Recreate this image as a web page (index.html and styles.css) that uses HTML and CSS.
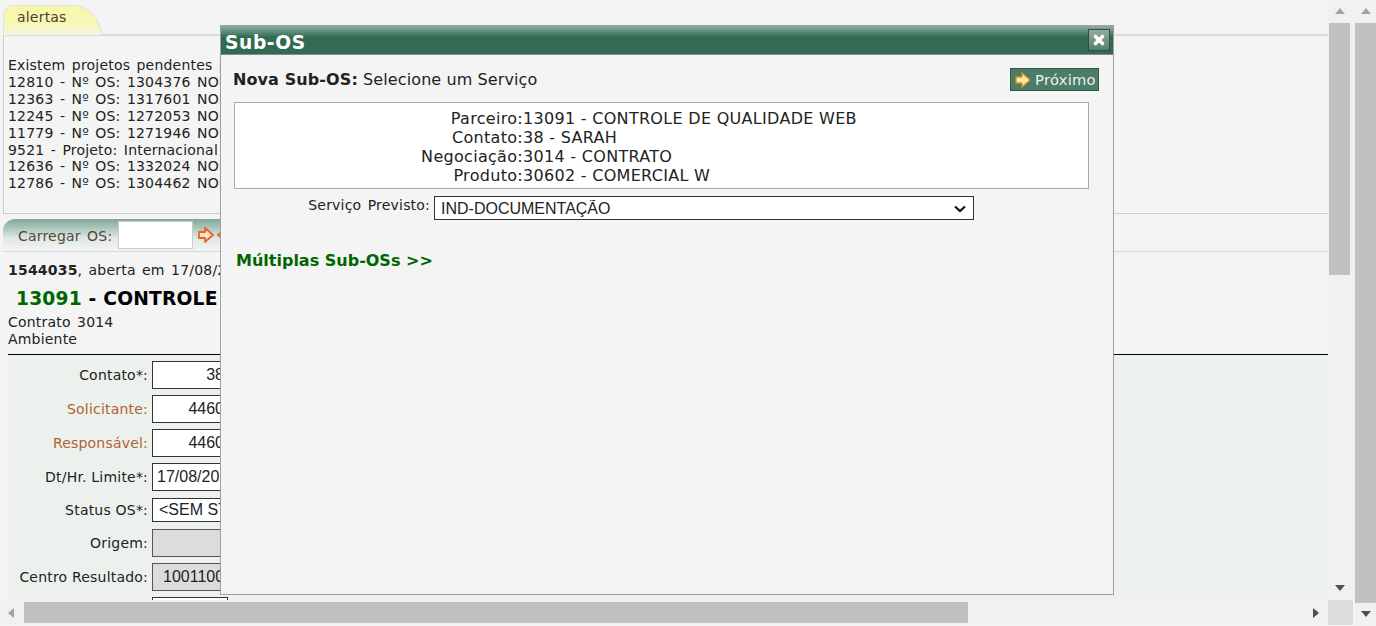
FILE: index.html
```html
<!DOCTYPE html>
<html lang="en">
<head>
  <meta charset="UTF-8">
  <title>Sub-OS</title>
  <link rel="stylesheet" href="styles.css">
</head>
<body>
  <div class="viewport">
    <div class="page">
      <div class="page-main">
        <div class="content">

          <!-- Alertas -->
          <div class="tab-row">
            <div class="tab-alert">alertas</div>
          </div>
          <div class="alert-box">
            <div>Existem projetos pendentes p</div>
            <div>12810 - Nº OS: 1304376 NOR</div>
            <div>12363 - Nº OS: 1317601 NOR</div>
            <div>12245 - Nº OS: 1272053 NOR</div>
            <div>11779 - Nº OS: 1271946 NOR</div>
            <div>9521 - Projeto: Internacional</div>
            <div>12636 - Nº OS: 1332024 NOR</div>
            <div>12786 - Nº OS: 1304462 NOR</div>
          </div>

          <!-- Carregar OS -->
          <div class="load-row">
            <div class="load-bar">
              <span class="load-label">Carregar OS:</span>
              <input type="text" class="load-input">
              <svg class="load-arrow" width="18" height="18" viewBox="0 0 18 18"><path d="M2 6h6V2l8 7-8 7v-4H2z" fill="#fde0c8" stroke="#e0662a" stroke-width="1.8" stroke-linejoin="round"/></svg>
              <svg class="load-arrow load-arrow-back" width="18" height="18" viewBox="0 0 18 18"><path d="M16 6h-6V2L2 9l8 7v-4h6z" fill="#fde0c8" stroke="#e0662a" stroke-width="1.8" stroke-linejoin="round"/></svg>
            </div>
          </div>

          <div class="os-info">
            <div class="os-open"><b>1544035</b>, aberta em 17/08/2021</div>
            <div class="os-title"><span class="os-code">13091</span> - CONTROLE</div>
            <div class="os-sub">Contrato 3014</div>
            <div class="os-sub">Ambiente</div>
          </div>

          <div class="form">
            <div class="form-row">
              <label class="form-label">Contato*:</label>
              <div class="field field-num">38</div>
            </div>
            <div class="form-row">
              <label class="form-label form-link">Solicitante:</label>
              <div class="field field-num">4460</div>
            </div>
            <div class="form-row">
              <label class="form-label form-link">Responsável:</label>
              <div class="field field-num">4460</div>
            </div>
            <div class="form-row">
              <label class="form-label">Dt/Hr. Limite*:</label>
              <div class="field field-wide">17/08/2021 12:00</div>
            </div>
            <div class="form-row form-row-short">
              <label class="form-label">Status OS*:</label>
              <div class="field field-wide field-select">&lt;SEM STATUS&gt;</div>
            </div>
            <div class="form-row">
              <label class="form-label">Origem:</label>
              <div class="field field-wide field-off"></div>
            </div>
            <div class="form-row">
              <label class="form-label">Centro Resultado:</label>
              <div class="field field-wide field-off field-center">10011001</div>
            </div>
            <div class="form-row">
              <label class="form-label"></label>
              <div class="field"></div>
            </div>
          </div>
        </div>

        <div class="vbar">
          <svg class="sb-arrow" width="12" height="8" viewBox="0 0 12 8"><path d="M6 1l5 6H1z" fill="#a3a3a3"/></svg>
          <div class="vbar-thumb"></div>
          <div class="sb-fill"></div>
          <svg class="sb-arrow" width="12" height="8" viewBox="0 0 12 8"><path d="M6 7L1 1h10z" fill="#505050"/></svg>
        </div>
      </div>

      <div class="hbar-row">
        <div class="hbar">
          <svg width="8" height="12" viewBox="0 0 8 12"><path d="M1 6l6-5v10z" fill="#a3a3a3"/></svg>
          <div class="hbar-thumb"></div>
          <div class="sb-fill"></div>
          <svg width="8" height="12" viewBox="0 0 8 12"><path d="M7 6L1 1v10z" fill="#505050"/></svg>
        </div>
        <div class="corner"></div>
      </div>
    </div>

    <!-- Janela Sub-OS -->
    <div class="dialog">
      <div class="dialog-title">
        <span class="dialog-name">Sub-OS</span>
        <div class="dialog-close">
          <svg width="16" height="16" viewBox="0 0 16 16"><path d="M4.5 4.5l7 7M11.5 4.5l-7 7" stroke="#fff" stroke-width="3.6" stroke-linecap="round"/></svg>
        </div>
      </div>
      <div class="dialog-body">
        <div class="dialog-head">
          <div class="dialog-step"><b>Nova Sub-OS:</b> Selecione um Serviço</div>
          <button class="btn-next">
            <svg width="16" height="16" viewBox="0 0 16 16"><path d="M1 5h6V1l8 7-8 7v-4H1z" fill="#ffe9a8" stroke="#d9902a" stroke-width="1.3" stroke-linejoin="round"/></svg>
            Próximo
          </button>
        </div>
        <div class="info-box">
          <div class="info-key">Parceiro:</div><div>13091 - CONTROLE DE QUALIDADE WEB</div>
          <div class="info-key">Contato:</div><div>38 - SARAH</div>
          <div class="info-key">Negociação:</div><div>3014 - CONTRATO</div>
          <div class="info-key">Produto:</div><div>30602 - COMERCIAL W</div>
        </div>
        <div class="service-row">
          <label class="service-label">Serviço Previsto:</label>
          <div class="select-wrap">
            <select class="service-select">
              <option>IND-DOCUMENTAÇÃO</option>
            </select>
            <svg class="select-chevron" width="14" height="8" viewBox="0 0 14 8"><path d="M2 1.5l5 4.5 5-4.5" fill="none" stroke="#111" stroke-width="2.2"/></svg>
          </div>
        </div>
        <div class="multi-link">Múltiplas Sub-OSs &gt;&gt;</div>
      </div>
    </div>
  </div>

  <div class="outer-bar">
    <svg class="sb-arrow" width="12" height="8" viewBox="0 0 12 8"><path d="M6 1l5 6H1z" fill="#a3a3a3"/></svg>
    <div class="outer-thumb"></div>
    <svg class="sb-arrow" width="12" height="8" viewBox="0 0 12 8"><path d="M6 7L1 1h10z" fill="#505050"/></svg>
  </div>
</body>
</html>
```

FILE: styles.css
```css
html, body {
  height: 100%;
}
body {
  margin: 0;
  display: flex;
  overflow: hidden;
  background: #f4f4f4;
  font-family: "DejaVu Sans", Verdana, sans-serif;
  font-size: 14px;
  letter-spacing: 0.2px;
  word-spacing: 1.7px;
  color: #222;
}
.viewport {
  position: relative;
  flex: 1;
  min-width: 0;
}
.page {
  height: 100%;
  display: flex;
  flex-direction: column;
}
.page-main {
  flex: 1;
  min-height: 0;
  display: flex;
}
.content {
  flex: 1;
  min-width: 0;
  overflow: hidden;
  padding-top: 5px;
}

/* alertas */
.tab-row {
  height: 29px;
  margin-left: 3px;
  border-bottom: 2px solid #dcdcdc;
}
.tab-alert {
  width: 84px;
  height: 29px;
  padding-left: 13px;
  line-height: 23px;
  border: 1px solid #e2e2e2;
  border-bottom: none;
  border-radius: 10px 30px 0 0;
  background: linear-gradient(#f8f8a8, #f7f7b4 60%, #f4f4ea);
  color: #4a4030;
}
.alert-box {
  height: 156px;
  padding: 21px 0 0 4px;
  margin-left: 3px;
  box-sizing: content-box;
  border-left: 1px solid #ccc;
  border-bottom: 1px solid #ccc;
  line-height: 16.9px;
  white-space: nowrap;
}

/* carregar os */
.load-row {
  height: 32px;
  margin: 5px 0 0 3px;
  border-bottom: 1px solid #d8d8d8;
}
.load-bar {
  width: 420px;
  height: 32px;
  display: flex;
  align-items: center;
  gap: 4px;
  border-radius: 12px 0 0 0;
  background: linear-gradient(#7fa898, #dfe8e3 60%, #f2f4f3);
}
.load-label {
  width: 96px;
  margin-left: 15px;
  padding-top: 1px;
  white-space: nowrap;
  color: #50483a;
}
.load-input {
  width: 75px;
  height: 28px;
  padding: 0;
  box-sizing: border-box;
  border: 1px solid #ccc;
  background: #fff;
}
.load-arrow {
  flex: none;
}
.load-arrow-back {
  margin-left: -3px;
}
.os-info {
  margin-left: 8px;
  padding-top: 10px;
  white-space: nowrap;
}
.os-open {
  line-height: 17px;
}
.os-title {
  margin: 8px 0 3px 8px;
  font-size: 18.67px;
  letter-spacing: 0.2px;
  word-spacing: 0;
  line-height: 24px;
  font-weight: bold;
  color: #000;
}
.os-code {
  color: #060;
}
.os-sub {
  line-height: 17px;
}

/* formulario */
.form {
  margin: 6px 0 0 8px;
  padding-top: 6px;
  height: 300px;
  border-top: 1px solid #000;
  background: #edf1ee;
}
.form-row {
  display: flex;
  align-items: center;
  gap: 4px;
  height: 28px;
  margin-bottom: 6px;
}
.form-row-short {
  height: 26px;
}
.form-label {
  width: 140px;
  text-align: right;
  letter-spacing: 0.2px;
  word-spacing: 0;
  white-space: nowrap;
}
.form-link {
  color: #b0622a;
}
.field {
  width: 76px;
  height: 28px;
  box-sizing: border-box;
  border: 1px solid #333;
  background: #fff;
  font-family: "Liberation Sans", Arial, sans-serif;
  font-size: 16px;
  letter-spacing: 0;
  word-spacing: 0;
  line-height: 26px;
  white-space: nowrap;
  overflow: hidden;
}
.field-num {
  padding-right: 3px;
  text-align: right;
}
.field-wide {
  width: 160px;
  padding-left: 4px;
}
.field-select {
  height: 24px;
  line-height: 22px;
  padding-left: 6px;
}
.field-off {
  background: #dcdcdc;
  border-color: #555;
}
.field-center {
  padding-left: 10px;
}

/* barras de rolagem */
.vbar {
  flex: none;
  width: 27px;
  box-sizing: border-box;
  padding-right: 4px;
  display: flex;
  flex-direction: column;
  align-items: center;
  background: #f1f1f1;
}
.sb-arrow {
  flex: none;
  margin: 7px 0 8px;
}
.vbar-thumb {
  flex: none;
  width: 21px;
  height: 252px;
  background: #c1c1c1;
}
.sb-fill {
  flex: 1;
}
.hbar-row {
  flex: none;
  height: 26px;
  display: flex;
}
.hbar {
  flex: 1;
  height: 25px;
  box-sizing: border-box;
  padding: 0 8px 0 7px;
  display: flex;
  align-items: center;
  background: #f1f1f1;
}
.hbar-thumb {
  flex: none;
  width: 944px;
  height: 21px;
  margin-left: 9px;
  background: #c1c1c1;
}
.corner {
  flex: none;
  width: 25px;
  height: 25px;
  margin-right: 2px;
  background: #dcdcdc;
}
.outer-bar {
  flex: none;
  width: 21px;
  display: flex;
  flex-direction: column;
  align-items: center;
  background: #f1f1f1;
}
.outer-thumb {
  flex: 1;
  width: 21px;
  background: #c1c1c1;
}

/* janela */
.dialog {
  position: absolute;
  left: 220px;
  top: 25px;
  width: 892px;
  height: 568px;
  border: 1px solid #a0a0a0;
  background: #f4f4f4;
}
.dialog-title {
  height: 28px;
  padding: 0 3px 0 4px;
  display: flex;
  align-items: center;
  justify-content: space-between;
  border-bottom: 1px solid #8a8a8a;
  background: linear-gradient(#8fae9f, #306b52 40%);
  color: #fff;
  font-size: 18.67px;
  letter-spacing: 0.6px;
  font-weight: bold;
}
.dialog-name {
  padding-top: 4px;
}
.dialog-close {
  width: 20px;
  height: 20px;
  display: flex;
  align-items: center;
  justify-content: center;
  border: 1px solid #27503e;
  background: linear-gradient(#93aca0, #55806c);
}
.dialog-body {
  padding: 0 13px 0 12px;
}
.dialog-head {
  height: 45px;
  padding: 2px 1px 0 0;
  display: flex;
  align-items: center;
  justify-content: space-between;
  font-size: 16px;
  letter-spacing: 0.1px;
  word-spacing: 0;
}
.btn-next {
  width: 89px;
  height: 23px;
  padding: 0 0 0 4px;
  display: flex;
  align-items: center;
  gap: 4px;
  border: 1px solid #2f5a48;
  background: #4a7c66;
  color: #f0f0f0;
  font-family: inherit;
  font-size: 14.67px;
  letter-spacing: 0.3px;
  white-space: nowrap;
}
.info-box {
  margin: 0 11px 0 1px;
  padding-top: 2px;
  height: 83px;
  border: 1px solid #aaa;
  background: #fff;
  display: grid;
  grid-template-columns: 288px 1fr;
  grid-auto-rows: 19px;
  align-content: center;
  font-size: 16px;
  letter-spacing: 0.3px;
  word-spacing: 0;
}
.info-key {
  text-align: right;
}
.service-row {
  margin-top: 7px;
  display: flex;
  align-items: flex-start;
  gap: 4px;
}
.service-label {
  width: 197px;
  padding-top: 1px;
  text-align: right;
  line-height: 16px;
  letter-spacing: 0.2px;
}
.select-wrap {
  position: relative;
  display: flex;
}
.service-select {
  width: 540px;
  height: 24px;
  padding: 0 6px;
  appearance: none;
  border: 1px solid #333;
  border-radius: 0;
  background: #fff;
  color: #222;
  font-family: "Liberation Sans", Arial, sans-serif;
  font-size: 16px;
  letter-spacing: 0;
}
.select-chevron {
  position: absolute;
  right: 7px;
  top: 9px;
}
.multi-link {
  margin: 31px 0 0 3px;
  font-size: 16px;
  letter-spacing: 0;
  word-spacing: 0;
  font-weight: bold;
  color: #060;
}
```
